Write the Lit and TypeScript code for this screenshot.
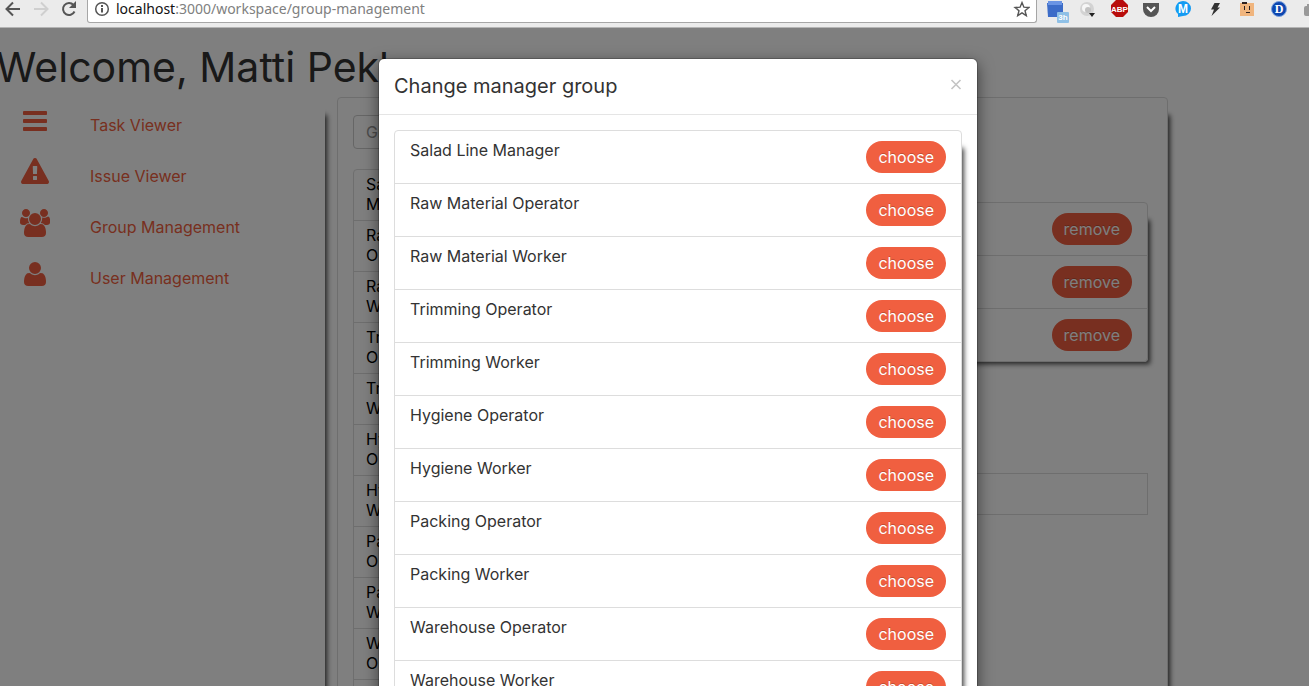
import { LitElement, html, css, svg } from "lit";
import { customElement, property } from "lit/decorators.js";

const GROUPS = [
  "Salad Line Manager",
  "Raw Material Operator",
  "Raw Material Worker",
  "Trimming Operator",
  "Trimming Worker",
  "Hygiene Operator",
  "Hygiene Worker",
  "Packing Operator",
  "Packing Worker",
  "Warehouse Operator",
  "Warehouse Worker",
];

const ICONS: Record<string, { box: string; d: string }> = {
  bars: {
    box: "0 0 1792 1792",
    d: "M1664 1344v128q0 26-19 45t-45 19h-1408q-26 0-45-19t-19-45v-128q0-26 19-45t45-19h1408q26 0 45 19t19 45zm0-512v128q0 26-19 45t-45 19h-1408q-26 0-45-19t-19-45v-128q0-26 19-45t45-19h1408q26 0 45 19t19 45zm0-512v128q0 26-19 45t-45 19h-1408q-26 0-45-19t-19-45v-128q0-26 19-45t45-19h1408q26 0 45 19t19 45z",
  },
  warning: {
    box: "0 0 1792 1792",
    d: "M1024 1375v-190q0-14-9.500-23.500t-22.500-9.500h-192q-13 0-22.500 9.500t-9.500 23.500v190q0 14 9.500 23.500t22.500 9.500h192q13 0 22.500-9.500t9.500-23.500zm-2-374l18-459q0-12-10-19-13-11-24-11h-220q-11 0-24 11-10 7-10 21l17 457q0 10 10 16.500t24 6.500h185q14 0 23.500-6.500t10.500-16.500zm-14-934l768 1408q35 63-2 126-17 29-46.500 46t-63.500 17h-1536q-34 0-63.500-17t-46.500-46q-37-63-2-126l768-1408q17-31 47-49t65-18 65 18 47 49z",
  },
  users: {
    box: "0 0 1920 1792",
    d: "M593 896q-162 5-265 128h-134q-82 0-138-40.500t-56-118.500q0-353 124-353 6 0 43.500 21t97.500 42.500 119 21.500q67 0 133-23-5 37-5 66 0 159 93 293zm1071 637q0 120-73 189.500t-194 69.500h-874q-121 0-194-69.500t-73-189.500q0-53 3.500-103.500t14-109 26.500-108.500 43-97.500 62-81 85.500-53.500 111.500-20q10 0 43 21.500t73 48 107 48 135 21.500 135-21.500 107-48 73-48 43-21.500q61 0 111.500 20t85.500 53.500 62 81 43 97.500 26.500 108.500 14 109 3.500 103.500zm-1024-1277q0 106-75 181t-181 75-181-75-75-181 75-181 181-75 181 75 75 181zm704 384q0 159-112.500 271.500t-271.500 112.500-271.500-112.500-112.500-271.500 112.500-271.500 271.500-112.500 271.500 112.500 112.500 271.500zm576 225q0 78-56 118.500t-138 40.500h-134q-103-123-265-128 93-134 93-293 0-29-5-66 66 23 133 23 59 0 119-21.500t97.500-42.500 43.500-21q124 0 124 353zm-128-609q0 106-75 181t-181 75-181-75-75-181 75-181 181-75 181 75 75 181z",
  },
  user: {
    box: "0 0 1792 1792",
    d: "M1600 1405q0 120-73 189.500t-194 69.500h-874q-121 0-194-69.500t-73-189.500q0-53 3.500-103.500t14-109 26.500-108.500 43-97.500 62-81 85.500-53.500 111.500-20q9 0 42 21.500t74.500 48 108 48 133.500 21.500 133.500-21.500 108-48 74.500-48 42-21.500q61 0 111.500 20t85.500 53.500 62 81 43 97.500 26.500 108.500 14 109 3.500 103.500zm-320-893q0 159-112.500 271.500t-271.500 112.500-271.500-112.500-112.500-271.500 112.500-271.500 271.500-112.500 271.500 112.500 112.500 271.500z",
  },
};

const shared = css`
  * { box-sizing: border-box; }
  ul { list-style: none; margin: 0; padding: 0; }
  button { font: inherit; border: 0; background: none; padding: 0; cursor: pointer; }
  .list { border: 1px solid #ddd; border-radius: 4px; box-shadow: 10px 10px 5px -8px #444; }
  .row { display: flex; justify-content: space-between; align-items: flex-start; padding: 10px 15px; }
  .row + .row { border-top: 1px solid #ddd; }
  .name { line-height: 18px; }
  .pill {
    height: 32px; padding: 0 12px; margin-left: auto; border-radius: 16px; background: #f05f40;
    color: #fff; line-height: 32px; text-shadow: 0 -1px 0 rgba(0, 0, 0, 0.2);
  }
`;

@customElement("browser-bar")
class BrowserBar extends LitElement {
  static styles = [shared, css`
    :host {
      display: flex; align-items: flex-start; height: 28px; background: #ebebeb;
      border-bottom: 1px solid #b4b4b4; overflow: hidden;
    }
    .nav { display: flex; gap: 8px; padding: 0 8px 0 3px; }
    .nav button, .ext button { display: block; width: 20px; height: 18px; }
    svg { display: block; width: 20px; height: 18px; }
    .address {
      flex: 1; display: flex; align-items: center; height: 23px; padding: 0 6px 4px 4px; background: #fff;
      border: 1px solid #a6a6a6; border-top: 0; border-radius: 0 0 3px 3px;
    }
    .url { flex: 1; padding-left: 4px; font: 14px/18px "Noto Sans", sans-serif; color: #808080; white-space: nowrap; }
    .host { color: #111; }
    .ext { display: flex; gap: 12px; padding-left: 8px; width: 272px; overflow: hidden; }
    .ext button { flex: none; height: 24px; }
    .ext svg { height: 24px; overflow: visible; }
    .tag { font: 700 8px "Liberation Sans", sans-serif; fill: #fff; text-anchor: middle; }
    .mark { font: 700 12px "Liberation Sans", sans-serif; fill: #fff; text-anchor: middle; }
    .serif { font-family: "Liberation Serif", serif; }
  `];

  private ext(label: string, art: unknown) {
    return html`<button aria-label=${label}><svg viewBox="0 0 20 24">${art}</svg></button>`;
  }

  render() {
    return html`
      <div class="nav">
        <button aria-label="Back"><svg viewBox="0 0 20 18" fill="none" stroke="#555" stroke-width="2"><path d="M17 9H4M10 2.500L3.500 9l6.500 6.500"/></svg></button>
        <button aria-label="Forward"><svg viewBox="0 0 20 18" fill="none" stroke="#cfcfcf" stroke-width="2"><path d="M3 9h13M10 2.500L16.500 9 10 15.500"/></svg></button>
        <button aria-label="Reload"><svg viewBox="0 0 20 18" fill="none" stroke="#555" stroke-width="2"><path d="M15.500 11.500A6 6 0 1 1 14.500 5"/><path d="M17 1v7h-7z" fill="#555" stroke="none"/></svg></button>
      </div>
      <div class="address">
        <svg viewBox="0 0 20 18" fill="none" stroke="#555" stroke-width="1.500"><circle cx="10" cy="9" r="6.300"/><path d="M10 8v4.500M10 5v2" stroke-width="2"/></svg>
        <span class="url"><span class="host">localhost</span>:3000/workspace/group-management</span>
        <button aria-label="Bookmark"><svg viewBox="0 0 20 18" fill="none" stroke="#555" stroke-width="1.400"><path d="M12 2.500l1.900 4.700 5 .3-3.900 3.200 1.300 4.900L12 12.900l-4.300 2.700L9 10.700 5.100 7.500l5-.3z"/></svg></button>
      </div>
      <div class="ext">
        ${this.ext("Calendar", svg`<path d="M2 3h16v14H3z" fill="#3c6cc8"/><path d="M3 1h14v4H3z" fill="#6a94e4"/><rect x="12" y="12" width="12" height="11" rx="1" fill="#8fc0e6"/><text class="tag" x="18" y="20">3h</text>`)}
        ${this.ext("Search", svg`<circle cx="10" cy="9" r="7" fill="#d3d3d3"/><circle cx="9" cy="8" r="4" fill="#f6f6f6"/><circle cx="11" cy="10" r="3" fill="#c2c2c2"/><path d="M12 13h6l-3 4z" fill="#222"/>`)}
        ${this.ext("Ad blocker", svg`<path d="M7 0h7l5 5v7l-5 5H7l-5-5V5z" fill="#b80c0c"/><text class="tag" x="10.500" y="12">ABP</text>`)}
        ${this.ext("Pocket", svg`<path d="M2 3h16v6a8 8 0 0 1-16 0z" fill="#555"/><path d="M6 7l4 4 4-4" fill="none" stroke="#fff" stroke-width="2"/>`)}
        ${this.ext("Messenger", svg`<path d="M10 1a8 7.500 0 0 1 0 15l-5 1v-3A8 7.500 0 0 1 10 1z" fill="#149bf3"/><text class="mark" x="10" y="13">M</text>`)}
        ${this.ext("Power", svg`<path d="M9.500 3h5.500l-2.500 4.500h2.500L6.500 16l2.500-6.500H6z" fill="#333"/>`)}
        ${this.ext("Face", svg`<path d="M3 3h14v13H3z" fill="#f0b57e"/><path d="M5 2h5v2H5zM7 6h1v4H7zM12 6h1v4h-1zM9 12h4v1H9z" fill="#2d2020"/>`)}
        ${this.ext("Dictionary", svg`<circle cx="10" cy="9" r="7.500" fill="#0d47b0" stroke="#7ba0dc"/><text class="mark serif" x="10" y="13">D</text>`)}
        ${this.ext("Camera", svg`<rect x="3" y="6" width="16" height="10" rx="2" fill="#999"/><circle cx="11" cy="11" r="3" fill="#eee"/><path d="M6 4h4v2H6z" fill="#999"/>`)}
      </div>`;
  }
}

@customElement("side-nav")
class SideNav extends LitElement {
  static styles = [shared, css`
    :host { display: block; padding: 10px 0 0 20px; box-shadow: 10px 10px 5px -8px #444; }
    .link {
      display: grid; grid-template-columns: 30px 1fr; column-gap: 40px; height: 51px;
      color: #f05f40; text-decoration: none;
    }
    .icon { display: block; width: 30px; height: 28px; fill: currentColor; }
    .label { padding-top: 8px; }
  `];

  private link(icon: string, label: string) {
    const { box, d } = ICONS[icon];
    return html`<li><a class="link" href="#">
      <svg class="icon" viewBox=${box} aria-hidden="true"><path d=${d} /></svg>
      <span class="label">${label}</span>
    </a></li>`;
  }

  render() {
    return html`<nav><ul>
      ${this.link("bars", "Task Viewer")}
      ${this.link("warning", "Issue Viewer")}
      ${this.link("users", "Group Management")}
      ${this.link("user", "User Management")}
    </ul></nav>`;
  }
}

@customElement("group-panel")
class GroupPanel extends LitElement {
  static styles = [shared, css`
    :host {
      display: grid; grid-template-columns: 132px 1fr; column-gap: 30px; align-items: start;
      padding: 17px 19px 0 15px; border: 1px solid #ddd; border-radius: 4px;
      box-shadow: 10px 10px 5px -8px #444;
    }
    .field {
      display: block; width: 100%; height: 34px; margin-bottom: 20px; padding: 0 12px; font: inherit;
      border: 1px solid #ccc; border-radius: 4px; background: #fff;
    }
    .field::placeholder { color: #999; opacity: 1; }
    .groups { border: 1px solid #ddd; border-radius: 4px; color: #000; }
    .group { padding: 4px 12px 6px; }
    .group + .group { border-top: 1px solid #ddd; }
    .detail { padding-top: 87px; }
    .well { height: 42px; margin-top: 111px; border: 1px solid #ddd; }
  `];

  render() {
    return html`
      <div>
        <input class="field" aria-label="Group" placeholder="Group" />
        <ul class="groups">${GROUPS.map((g) => html`<li class="group">${g}</li>`)}</ul>
      </div>
      <div class="detail">
        <ul class="list">
          ${[0, 1, 2].map(() => html`<li class="row"><button class="pill">remove</button></li>`)}
        </ul>
        <div class="well"></div>
      </div>`;
  }
}

@customElement("group-dialog")
class GroupDialog extends LitElement {
  @property({ type: Array }) groups: string[] = [];

  static styles = [shared, css`
    :host {
      display: block; width: 600px; max-width: 100%; background: #fff; background-clip: padding-box;
      border: 1px solid rgba(0, 0, 0, 0.2); border-radius: 6px; box-shadow: 0 5px 15px rgba(0, 0, 0, 0.5);
    }
    .head { display: flex; justify-content: space-between; padding: 15px; border-bottom: 1px solid #e5e5e5; }
    .title { margin: 0; font-size: 20px; line-height: 25px; font-weight: 400; }
    .close { height: 20px; color: #c4c4c4; }
    .close svg { display: block; width: 12px; height: 20px; }
    .body { padding: 15px; }
  `];

  render() {
    return html`
      <section role="dialog" aria-labelledby="title">
        <header class="head">
          <h2 class="title" id="title">Change manager group</h2>
          <button class="close" aria-label="Close"><svg viewBox="0 0 12 20" fill="none" stroke="currentColor" stroke-width="1.600"><path d="M1.500 6l9 9M10.500 6l-9 9"/></svg></button>
        </header>
        <div class="body">
          <ul class="list">
            ${this.groups.map((g) => html`<li class="row"><span class="name">${g}</span><button class="pill">choose</button></li>`)}
          </ul>
        </div>
      </section>`;
  }
}

@customElement("app-root")
class AppRoot extends LitElement {
  static styles = [shared, css`
    :host {
      display: flex; flex-direction: column; height: 100vh; overflow: hidden; background: #fff;
      color: #333; font: 16px/20px Inter, "Liberation Sans", sans-serif;
    }
    .page { flex: 1; min-height: 0; position: relative; overflow: hidden; }
    .welcome { margin: 19px 0 10px -4px; font-size: 41px; line-height: 40px; font-weight: 400; white-space: nowrap; }
    .columns { display: grid; grid-template-columns: 325px 1fr; column-gap: 12px; padding-right: 141px; min-height: 100%; }
    .backdrop {
      position: absolute; inset: 0; display: flex; justify-content: center; align-items: flex-start;
      padding: 30px 0 0 47px; background: rgba(0, 0, 0, 0.5);
    }
  `];

  render() {
    return html`
      <browser-bar></browser-bar>
      <main class="page">
        <h1 class="welcome">Welcome, Matti Pekka</h1>
        <div class="columns">
          <side-nav></side-nav>
          <group-panel></group-panel>
        </div>
        <div class="backdrop"><group-dialog .groups=${GROUPS}></group-dialog></div>
      </main>`;
  }
}
